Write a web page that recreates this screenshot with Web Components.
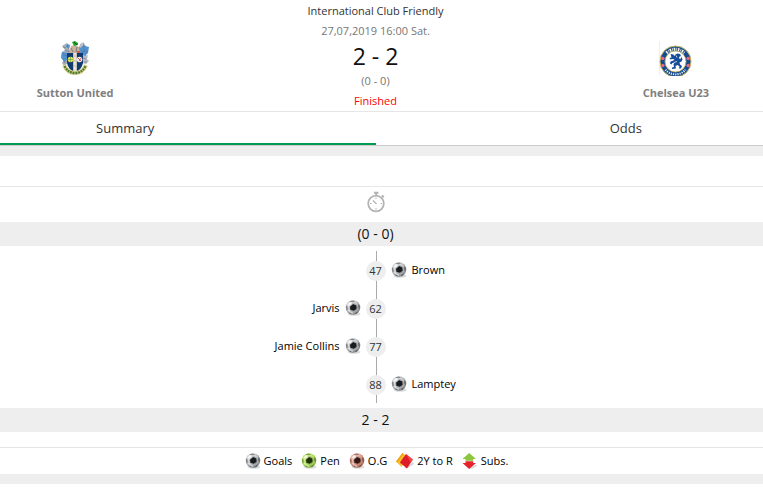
<!DOCTYPE html>
<html lang="en">
<head>
<meta charset="utf-8">
<title>Sutton United - Chelsea U23</title>
<style>
body{margin:0;background:#fff;color:#000;font-family:"Open Sans","Noto Sans",sans-serif;font-size:12px;line-height:20px}
</style>
</head>
<body>
<match-page></match-page>
<script>
const define = (name, html, setup) => customElements.define(name, class extends HTMLElement {
  constructor() {
    super();
    const t = document.createElement('template');
    t.innerHTML = html;
    this.attachShadow({mode: 'open'}).append(t.content.cloneNode(true));
  }
  connectedCallback() { if (setup) setup(this, this.shadowRoot); }
});

const ball = (light, mid, dark, spot) => `
<svg width="16" height="16" viewBox="0 0 16 16" aria-hidden="true">
<defs><radialGradient id="b" cx=".4" cy=".35" r=".65"><stop offset="0" stop-color="${light}"/><stop offset=".6" stop-color="${mid}"/><stop offset="1" stop-color="${dark}"/></radialGradient></defs>
<ellipse cx="9" cy="14" rx="6.5" ry="1.7" fill="#000" opacity=".14"/>
<circle cx="8" cy="7.5" r="7.3" fill="url(#b)"/>
<path d="M4 1.8 7 .6l3 .3-1.5 1.3-2.5.2zM1.1 5.5l1.4.8.3 3-1.2 1.2-.6-3zM13.3 4l1.5 2v3l-1.3-.7-.8-2zM4 12.2l2 .5 1 1.6-1.8-.4zM10.5 12.8l2.3-1.4-1 2-1.8.9z" fill="${spot}" opacity=".4"/>
<circle cx="8.3" cy="7.3" r="4.2" fill="${spot}" opacity=".22"/>
<path d="m8.1 4 3.2 1.4.3 3.4-2.8 1.9-3.4-.9-.4-3z" fill="${spot}"/>
<ellipse cx="5" cy="3.8" rx="2.2" ry="1.2" fill="#fff" opacity=".75" transform="rotate(-35 5 3.8)"/>
<path d="M3.500 10q1.500 3 4.500 3.200" fill="none" stroke="#fff" opacity=".55" stroke-width="1.200"/>
</svg>`;

const icons = {
  goal: ball('#fff', '#c4c7ca', '#7d8185', '#191b1d'),
  pen: ball('#f0ffc4', '#b8e663', '#7fb23a', '#20300c'),
  own: ball('#ffe9e2', '#dda393', '#a86253', '#361713'),
  cards: `<svg width="18" height="16" viewBox="0 0 18 16" aria-hidden="true"><path d="m8 15 9-6 1 2-6 4z" fill="#000" opacity=".16"/><path d="M6.500 0 12 4 5.500 14 0 8.500z" fill="#f9c22c"/><path d="m6.500 0 1.200 1L1.300 9.800 0 8.500z" fill="#eda319"/><path d="m10 1 6.800 5.500L11 15.500 3.800 9.500z" fill="#df1d28"/><path d="m10 1 6.800 5.500-2 3z" fill="#f04a46"/></svg>`,
  subs: `<svg width="16" height="16" viewBox="0 0 16 16" aria-hidden="true"><path d="m7 15 6-3h3l-6 4z" fill="#000" opacity=".15"/><path d="M7.200 0 14 6H11.200V7.700H3.500V6H.500z" fill="#8cc63e"/><path d="M3.500 8.300h7.700V10H14l-6.800 6L.500 10h3z" fill="#e5232d"/></svg>`,
  clock: `<svg width="20" height="22" viewBox="0 0 20 22" fill="none" stroke="#b3b3b3" aria-hidden="true"><circle cx="10" cy="12.500" r="7.800" stroke-width="1.800"/><path d="M8 1.800h4.500M10.200 2v3M15.800 4.500l2 1.600" stroke-width="2"/><path d="m7 9.500 3.500 3.500" stroke-width="1.300"/><path d="M10 6.500v1.500M10 17v1.500M4 12.500h1.500M14.500 12.500H16"/></svg>`,
  sutton: `<svg width="30" height="36" viewBox="0 0 30 36" aria-hidden="true">
<path d="M2 6 7 3l3 3-1 3 4 3-2 3-3 1-1 8-3 2-2-3 2-4-3-3 1-4 3-2z" fill="#a6aeb9"/>
<path d="m2 12 6 1 1 4-4 5-4-4zM7 4l3 1-1 3-3-1z" fill="#4f91d1"/>
<path d="m20 5 4-2 1 3 4 1-1 6-2 2 1 4-2 4-4-1-1-7-2-4z" fill="#4f91d1"/>
<path d="m22 14 3 2 3-1-1 4 2 2-3 3-4-1zM20 4l4-2-1 4-3 2z" fill="#b9bdc4"/>
<path d="m3 7 3 1M5 10l5 2M3 14l4 2M3 19l2 4M22 7l4-1M22 11l5 1M23 18l3 1M24 22h3M7 6l2 3M25 9l-4 6" stroke="#5d6d82" stroke-width=".6"/>
<path d="m11 6 4-1 4 2 1 6H9z" fill="#c9b19b"/><path d="m11 8 2 4M17 7l-1 5" stroke="#777c83"/><path d="M17 11h3v2h-3z" fill="#e35b3d"/>
<path d="m12 2 3-1 3 2v2l-4 1-1-2z" fill="#20a52a"/><path d="m14 2 3 3" stroke="#115c1b"/>
<path d="M7 13h16v10q-1 6-8 10-7-4-8-10z" fill="#123a70"/>
<path d="M13.200 13h3.600v19l-1.800 1-1.800-1z" fill="#eee5d4"/><path d="M15 15v14" stroke="#c6a97c" stroke-width=".8" stroke-dasharray="2 3"/>
<circle cx="10.500" cy="19.500" r="2.800" fill="#e3e542"/><path d="M10.500 17v5M8 19.500h5" stroke="#6a9c55" stroke-width=".6"/>
<circle cx="19.500" cy="19.500" r="2.800" fill="#f3eeee"/><path d="m18 18 3 3m0-3-2 3" stroke="#d1464a" stroke-width=".9"/>
<path d="M4 25q3 8 11 8t11-8" fill="none" stroke="#e0d394" stroke-width="4"/><path d="M4.500 26q3.500 7 10.500 7t10.500-7" fill="none" stroke="#4d7c2c" stroke-width="2.300" stroke-dasharray="2 .7"/></svg>`,
  chelsea: `<svg width="34" height="36" viewBox="0 0 34 36" aria-hidden="true">
<path d="M.5 1v34" stroke="#eee"/>
<circle cx="16.500" cy="21.500" r="15.500" fill="#164a91" stroke="#c9b65e"/><circle cx="16.500" cy="21.500" r="10.500" fill="#fff" stroke="#c9b65e" stroke-width=".8"/>
<path d="M7.500 13A12.500 12.500 0 0 1 25.500 13" fill="none" stroke="#f4f3e6" stroke-width="3" stroke-dasharray="1.600 1 .7 .8"/>
<path d="M6.500 29.700A13 13 0 0 0 26.500 29.700" fill="none" stroke="#e8ecf0" stroke-width="2" stroke-dasharray="1.200 1"/>
<g fill="#e8657f"><circle cx="3.800" cy="18.500" r="1.800"/><circle cx="3.800" cy="25.500" r="1.800"/><circle cx="29.200" cy="18.500" r="1.800"/><circle cx="29.200" cy="25.500" r="1.800"/></g>
<path d="m11.500 14 3 .5 1 1.500 1-1.500 2-1 2.500.5 1 2-2 1 .5 2 1.500-.5.500-2 1 3-1 2-2 1 .5 2 2 1.500-1 2.500h-2l.5-2-2-1.500-2 1 .5 2.500-4 .5v-1.500l2-.5-.5-2.500 1-2-2 .5-1 1.500-1.500-1 .5-2 3-1 1-1-2-.5-2 .5-1-1.500 2-.5z" fill="#174d99"/><path d="m17 15.500 1 2M15 22.500l3-1" stroke="#fff" stroke-width=".7"/></svg>`
};

define('match-icon', `<style>:host{display:inline-flex;flex:none}svg{display:block}</style><span></span>`,
  (el, root) => { root.querySelector('span').innerHTML = icons[el.getAttribute('name')]; });

define('team-card', `<style>:host{display:flex;flex-direction:column;align-items:center;padding-top:40px;color:#808080;font-weight:700;font-size:11px;text-align:center}slot[name=crest]{display:block;height:36px}.name{margin-top:7px}</style>
<slot name="crest"></slot><div class="name"><slot></slot></div>`);

define('match-header', `<style>
:host{display:grid;grid-template-columns:1fr 3fr 1fr;padding-right:12px;border-bottom:1px solid #e6e6e6}
.center{display:flex;flex-direction:column;align-items:center;padding:1px 0 0;color:#777;font-size:11px}
h1{margin:0;font-size:11px;font-weight:500;color:#333}.score{font-size:23px;line-height:30px;color:#111;font-weight:400}.done{color:#f00}
</style>
<team-card><match-icon slot="crest" name="sutton"></match-icon>Sutton United</team-card>
<div class="center"><h1>International Club Friendly</h1><div>27,07,2019 16:00 Sat.</div><div class="score">2 - 2</div><div>(0 - 0)</div><div class="done">Finished</div></div>
<team-card><match-icon slot="crest" name="chelsea"></match-icon>Chelsea U23</team-card>`);

define('tab-bar', `<style>
:host{display:block;border-bottom:1px solid #ccc}
nav{display:grid;grid-template-columns:1fr 1fr;padding-right:12px}
button{font:inherit;font-size:13px;line-height:20px;color:#333;background:none;border:0;border-bottom:2px solid transparent;padding:6px 0 5px;cursor:pointer}
button:first-child{padding-right:33.33%;border-color:#009a57}button:last-child{padding-left:33.33%}
</style><nav role="tablist"><button role="tab" aria-selected="true">Summary</button><button role="tab" aria-selected="false">Odds</button></nav>`);

define('score-band', `<style>:host{display:block;background:#eee;padding:2px 12px 2px 0;text-align:center;font-size:14px;color:#111}</style><slot></slot>`);

define('goal-event', `<style>
:host{display:grid;grid-template-columns:1fr 20px 1fr;align-items:center;column-gap:5px;height:38px;padding-right:12px;font-size:11px;background:linear-gradient(#aaa,#aaa) calc(50% - 5px) 0/1px 100% no-repeat}
.minute{height:20px;margin-top:2px;border-radius:50%;background:#eee;color:#333;text-align:center}
.player{display:flex;align-items:center;gap:5px}
:host([side=home]) .player{order:-1;flex-direction:row-reverse}
:host([side=away]) .player{order:2}
:host([side=home])::after{content:""}:host([side=away])::before{content:""}
</style><div class="minute"></div><div class="player"><match-icon name="goal"></match-icon><slot></slot></div>`,
  (el, root) => { root.querySelector('.minute').textContent = el.getAttribute('minute'); });

define('match-legend', `<style>
:host{display:block;border-top:1px solid #e6e6e6;border-bottom:10px solid #eee}
ul{display:flex;justify-content:center;gap:9px;margin:0;padding:3px 10px 3px 0;list-style:none;font-size:11px}
li{display:flex;align-items:center;gap:3px}
</style><ul><li><match-icon name="goal"></match-icon>Goals</li><li><match-icon name="pen"></match-icon>Pen</li><li><match-icon name="own"></match-icon>O.G</li><li><match-icon name="cards"></match-icon>2Y to R</li><li><match-icon name="subs"></match-icon>Subs.</li></ul>`);

define('match-page', `<style>
:host{display:block}
.strip{height:10px;background:#eee}
.blank{height:30px;border-bottom:1px solid #e6e6e6}
.clock{display:flex;justify-content:center;padding:4px 11px 9px 0}
.events{padding:5px 0}
.legend{padding-top:15px}
</style>
<match-header></match-header><tab-bar></tab-bar><div class="strip"></div><div class="blank"></div>
<div class="clock"><match-icon name="clock"></match-icon></div>
<score-band>(0 - 0)</score-band>
<div class="events">
<goal-event side="away" minute="47">Brown</goal-event>
<goal-event side="home" minute="62">Jarvis</goal-event>
<goal-event side="home" minute="77">Jamie Collins</goal-event>
<goal-event side="away" minute="88">Lamptey</goal-event>
</div>
<score-band>2 - 2</score-band>
<div class="legend"><match-legend></match-legend></div>`);
</script>
</body>
</html>
